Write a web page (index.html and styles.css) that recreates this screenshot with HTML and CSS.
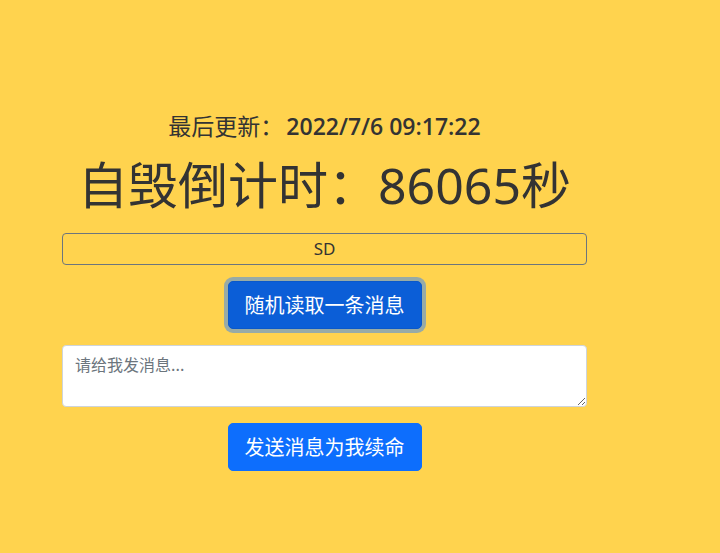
FILE: index.html
```html
<!DOCTYPE html>
<html lang="zh">
<head>
<meta charset="utf-8">
<title>自毁倒计时</title>
<link rel="stylesheet" href="styles.css">
</head>
<body>
<main class="wrap">
  <p class="updated">最后更新：<strong class="date">2022/7/6 09:17:22</strong></p>
  <h1 class="countdown">自毁倒计时：86065秒</h1>
  <div class="msg">SD</div>
  <button class="btn btn-focus" type="button">随机读取一条消息</button>
  <textarea class="area" rows="2" placeholder="请给我发消息..."></textarea>
  <button class="btn btn-send" type="button">发送消息为我续命</button>
</main>
</body>
</html>
```
FILE: styles.css
```css
html, body {
  margin: 0;
  padding: 0;
  background: #ffd34e;
  height: 100%;
}
body {
  font-family: "Noto Sans", "Noto Sans CJK SC", sans-serif;
  color: #333;
}
.wrap {
  width: 525px;
  margin-left: 62px;
  padding-top: 112px;
  display: flex;
  flex-direction: column;
  align-items: center;
}
.updated {
  margin: 0;
  font-size: 23px;
  line-height: 28px;
}
.date {
  font-family: "Open Sans", "Noto Sans", sans-serif;
  font-weight: 600;
  margin-left: 3px;
}
.countdown {
  margin: 15px 0 0;
  font-size: 50px;
  font-weight: 400;
  line-height: 60px;
}
.msg {
  margin-top: 18px;
  align-self: stretch;
  box-sizing: border-box;
  height: 32px;
  border: 1px solid #6c757d;
  border-radius: 4px;
  text-align: center;
  font-size: 17px;
  line-height: 30px;
  font-weight: 400;
}
.btn {
  margin-top: 16px;
  box-sizing: border-box;
  height: 48px;
  padding: 0 16px;
  border: 1px solid transparent;
  border-radius: 5px;
  font-family: "Noto Sans CJK SC", sans-serif;
  font-size: 20px;
  line-height: 30px;
  color: #fff;
  cursor: pointer;
}
.btn-focus {
  background: #0b5ed7;
  border-color: #0a58ca;
  box-shadow: 0 0 0 4px rgba(49, 132, 253, 0.5);
}
.btn-send {
  background: #0d6efd;
  border-color: #0d6efd;
}
.area {
  margin-top: 16px;
  align-self: stretch;
  box-sizing: border-box;
  height: 62px;
  padding: 6px 12px;
  border: 1px solid #ced4da;
  border-radius: 4px;
  background: #fff;
  font-family: "Noto Sans CJK SC", sans-serif;
  font-size: 16px;
  line-height: 24px;
  color: #212529;
  resize: vertical;
}
.area::placeholder {
  color: #6c757d;
}
```
